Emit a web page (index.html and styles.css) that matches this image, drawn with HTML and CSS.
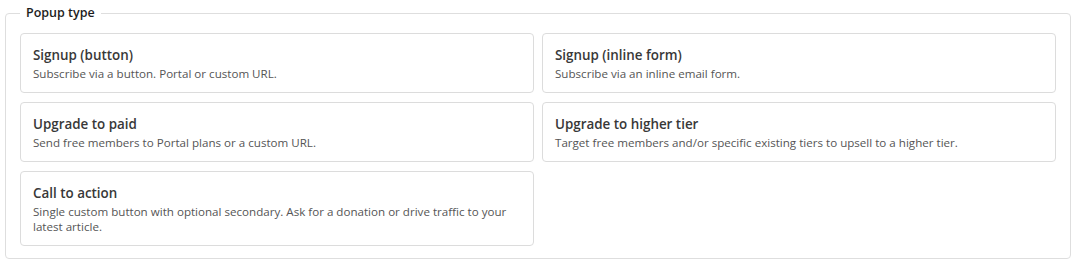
FILE: index.html
```html
<!DOCTYPE html>
<html lang="en">
<head>
<meta charset="UTF-8">
<meta name="viewport" content="width=device-width, initial-scale=1.0">
<title>Popup type</title>
<link rel="stylesheet" href="styles.css">
</head>
<body>

<fieldset class="popup-type">
    <legend>Popup type</legend>

    <div class="type-grid">
        <div class="type-card">
            <h4>Signup (button)</h4>
            <p>Subscribe via a button. Portal or custom URL.</p>
        </div>
        <div class="type-card">
            <h4>Signup (inline form)</h4>
            <p>Subscribe via an inline email form.</p>
        </div>
        <div class="type-card">
            <h4>Upgrade to paid</h4>
            <p>Send free members to Portal plans or a custom URL.</p>
        </div>
        <div class="type-card">
            <h4>Upgrade to higher tier</h4>
            <p>Target free members and/or specific existing tiers to upsell to a higher tier.</p>
        </div>
        <div class="type-card">
            <h4>Call to action</h4>
            <p>Single custom button with optional secondary. Ask for a donation or drive traffic to your latest article.</p>
        </div>
    </div>
</fieldset>

</body>
</html>
```

FILE: styles.css
```css
/* Reset */
* {
    box-sizing: border-box;
    margin: 0;
    padding: 0;
    font-family: 'Open Sans', 'Noto Sans', sans-serif;
}

body {
    background: #fff;
    padding: 0 9px 0 5px;
    color: #333;
}

/* Fieldset */
.popup-type {
    border: 1px solid #dedede;
    border-radius: 4px;
    padding: 7px 14px 12px;
}

.popup-type legend {
    padding: 0 6px;
    font-size: 12.5px;
    font-weight: 600;
    line-height: 26px;
    color: #1d1d1d;
}

/* Cards */
.type-grid {
    display: grid;
    grid-template-columns: 1fr 1fr;
    column-gap: 8px;
    row-gap: 9px;
}

.type-card {
    border: 1px solid #dcdcdc;
    border-radius: 4px;
    padding: 12px 12px 11px;
    background: #fff;
}

.type-card h4 {
    font-size: 13.4px;
    font-weight: 600;
    line-height: 19px;
    color: #383838;
}

.type-card p {
    margin-top: 1px;
    font-size: 11.6px;
    line-height: 15px;
    color: #555;
}
```
